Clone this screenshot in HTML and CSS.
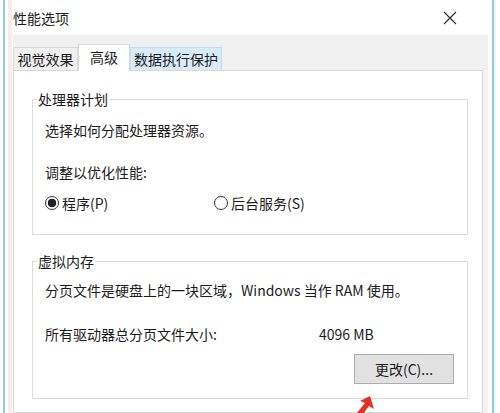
FILE: index.html
```html
<!DOCTYPE html>
<html lang="zh-CN">

<head>
    <meta charset="utf-8">
    <title>性能选项</title>
    <link rel="stylesheet" href="styles.css">
</head>

<body>
    <div class="screen">
        <div class="edge edge-left"></div>

        <div class="dialog">
            <!-- title bar -->
            <div class="titlebar">
                <span class="title">性能选项</span>
                <svg class="close" width="14" height="14" viewBox="0 0 14 14">
                    <path d="M1 1 L13 13 M13 1 L1 13" stroke="#2b2b2b" stroke-width="1.1" fill="none"/>
                </svg>
            </div>

            <!-- tabs -->
            <div class="tabs">
                <div class="tab">视觉效果</div>
                <div class="tab tab-active">高级</div>
                <div class="tab tab-hover">数据执行保护</div>
            </div>

            <div class="panel">
                <fieldset class="group group-cpu">
                    <legend>处理器计划</legend>
                    <p class="line">选择如何分配处理器资源。</p>
                    <p class="line gap-big">调整以优化性能:</p>
                    <div class="radios">
                        <label class="radio radio-first"><span class="dot dot-on"></span>程序(P)</label>
                        <label class="radio"><span class="dot"></span>后台服务(S)</label>
                    </div>
                </fieldset>

                <fieldset class="group group-mem">
                    <legend>虚拟内存</legend>
                    <p class="line">分页文件是硬盘上的一块区域，Windows 当作 RAM 使用。</p>
                    <div class="size-row">
                        <span class="size-label">所有驱动器总分页文件大小:</span>
                        <span>4096 MB</span>
                    </div>
                    <button class="btn">更改(C)...</button>
                </fieldset>
            </div>
        </div>

        <div class="edge edge-right"></div>

        <!-- red pointer over the button -->
        <svg class="arrow" width="24" height="20" viewBox="0 0 24 20">
            <polygon points="18,2 22,15 17,12 11,20 4,20 13,9 8,7" fill="#e2312b"/>
        </svg>
    </div>
</body>

</html>
```

FILE: styles.css
```css
body {
    margin: 0;
    overflow: hidden;
    background-color: #fff;
    font-family: "Noto Sans CJK SC", "Noto Sans", sans-serif;
    font-size: 14px;
    color: #1b1b1b;
}

.screen {
    position: relative;
    display: flex;
    width: 500px;
    height: 413px;
    overflow: hidden;
}

/* window frame bits on both sides */
.edge {
    flex: none;
}

.edge-left {
    width: 13px;
    background: linear-gradient(to right, #fff 0 3px, #8fcfcf 3px 5px, #fff 5px 8px, #fbeaea 8px 12px, #fff 12px);
}

.edge-right {
    width: 12px;
    background: linear-gradient(to right, #fff 0 4px, #8fcfcf 4px 6px, #eef6f6 6px 8px, #fff 8px);
}

.dialog {
    flex: 1;
    display: flex;
    flex-direction: column;
    background-color: #f6f2f2;
}

.titlebar {
    height: 35px;
    flex: none;
    display: flex;
    align-items: center;
    justify-content: space-between;
    padding-right: 31px;
    background-color: #fff;
}

.title {
    line-height: 20px;
}

.close {
    display: block;
}

/* tab strip */
.tabs {
    height: 35px;
    flex: none;
    display: flex;
    align-items: flex-end;
    background-color: #f0f0f0;
}

.tab {
    height: 23px;
    box-sizing: border-box;
    display: flex;
    align-items: center;
    justify-content: center;
    border: 1px solid #d9d9d9;
    border-bottom: none;
    background-color: #f0f0f0;
    line-height: 20px;
}

.tab:nth-child(1) {
    width: 65px;
}

.tab-active {
    width: 52px;
    height: 27px;
    margin-bottom: -1px;
    padding-bottom: 2px;
    background-color: #fff;
    position: relative;
    z-index: 1;
}

.tab-hover {
    width: 92px;
    background-color: #d9eaf9;
    border-color: #c3dcf3;
}

.panel {
    flex: 1;
    margin-right: 5px;
    border: 1px solid #d9d9d9;
    background-color: #fff;
    padding: 0 14px 0 18px;
}

/* group boxes */
.group {
    margin: 0;
    border: 1px solid #dcdcdc;
    padding: 11px 13px 21px 12px;
    min-width: 0;
    display: flex;
    flex-direction: column;
}

.group legend {
    margin-left: -8px;
    padding: 0 1px;
    line-height: 20px;
}

.group-cpu {
    margin-top: 18px;
}

.group-mem {
    margin-top: 16px;
    padding-top: 9px;
    padding-bottom: 14px;
}

.line {
    margin: 0;
    line-height: 20px;
}

.gap-big {
    margin-top: 22px;
}

.radios {
    display: flex;
    margin-top: 11px;
    line-height: 20px;
}

.radio {
    display: flex;
    align-items: center;
    gap: 3px;
}

.radio-first {
    width: 169px;
}

.dot {
    width: 14px;
    height: 14px;
    box-sizing: border-box;
    border: 1px solid #333;
    border-radius: 50%;
    background-color: #fff;
}

.dot-on {
    background: radial-gradient(circle, #222 0 4px, #fff 4.6px);
}

.size-row {
    display: flex;
    margin-top: 24px;
    line-height: 20px;
}

.size-label {
    width: 274px;
}

.btn {
    align-self: flex-end;
    margin-top: 10px;
    width: 100px;
    height: 30px;
    border: 1px solid #adadad;
    background-color: #e1e1e1;
    font-family: inherit;
    font-size: 14px;
    color: #1b1b1b;
    padding: 0;
}

.arrow {
    position: absolute;
    left: 352px;
    top: 394px;
}
```
